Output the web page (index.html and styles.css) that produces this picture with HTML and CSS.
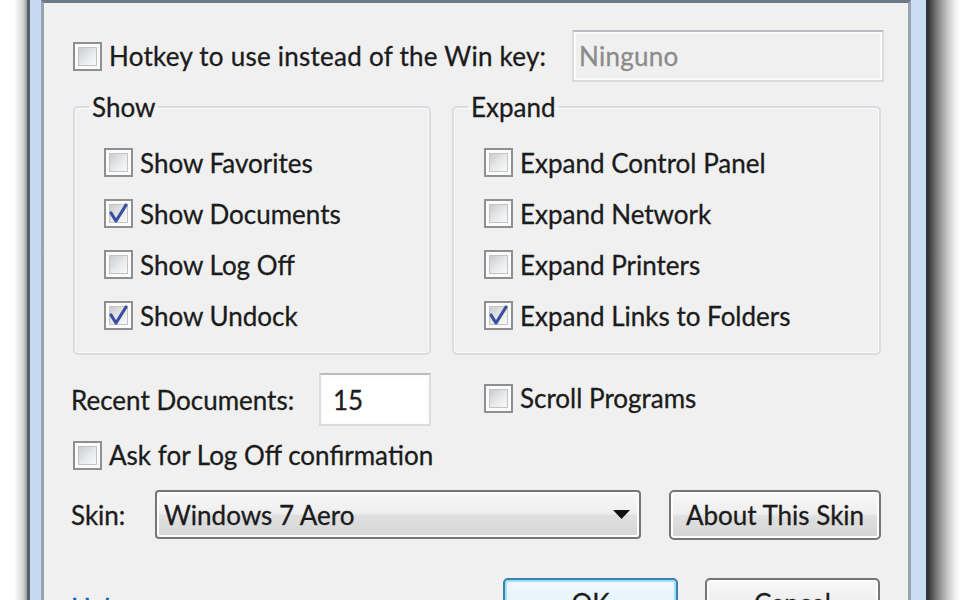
FILE: index.html
```html
<!DOCTYPE html>
<html lang="en">
<head>
    <meta charset="UTF-8">
    <meta name="viewport" content="width=device-width, initial-scale=1.0">
    <title>Start Menu Settings</title>
    <link rel="stylesheet" href="styles.css">
</head>
<body>
    <div class="desk"></div>
    <div class="window">
        <div class="client">
            <div class="hotkey-row">
                <label class="check"><span class="box"></span>Hotkey to use instead of the Win key:</label>
                <div class="field field-disabled">Ninguno</div>
            </div>

            <div class="groups">
                <fieldset class="group group-show">
                    <legend>Show</legend>
                    <div class="group-body">
                        <label class="check row"><span class="box"></span>Show Favorites</label>
                        <label class="check row"><span class="box"><svg viewBox="0 0 29 29"><path d="M7 14 L12 22 L22 6"/></svg></span>Show Documents</label>
                        <label class="check row"><span class="box"></span>Show Log Off</label>
                        <label class="check row"><span class="box"><svg viewBox="0 0 29 29"><path d="M7 14 L12 22 L22 6"/></svg></span>Show Undock</label>
                    </div>
                </fieldset>
                <fieldset class="group group-expand">
                    <legend>Expand</legend>
                    <div class="group-body">
                        <label class="check row"><span class="box"></span>Expand Control Panel</label>
                        <label class="check row"><span class="box"></span>Expand Network</label>
                        <label class="check row"><span class="box"></span>Expand Printers</label>
                        <label class="check row"><span class="box"><svg viewBox="0 0 29 29"><path d="M7 14 L12 22 L22 6"/></svg></span>Expand Links to Folders</label>
                    </div>
                </fieldset>
            </div>

            <div class="options">
                <div class="recent">
                    <span>Recent Documents:</span>
                    <div class="field field-number">15</div>
                </div>
                <label class="check scroll"><span class="box"></span>Scroll Programs</label>
            </div>

            <label class="check ask"><span class="box"></span>Ask for Log Off confirmation</label>

            <div class="skin-row">
                <span class="skin-label">Skin:</span>
                <div class="combo">
                    <span>Windows 7 Aero</span>
                    <svg class="arrow" viewBox="0 0 17 9"><path d="M0 0 H17 L8.5 9 Z"/></svg>
                </div>
                <button class="btn about">About This Skin</button>
            </div>

            <div class="footer">
                <a class="help" href="#">Help</a>
                <div class="actions">
                    <button class="btn btn-default">OK</button>
                    <button class="btn">Cancel</button>
                </div>
            </div>
        </div>
    </div>
    <div class="shadow"></div>
</body>
</html>
```

FILE: styles.css
```css
* {
    margin: 0;
    padding: 0;
    box-sizing: border-box;
}

body {
    width: 960px;
    height: 600px;
    overflow: hidden;
    display: flex;
    background-color: #fff;
    font-family: "Lato", "Open Sans", sans-serif;
    font-size: 26px;
    color: #1b1b1b;
    -webkit-text-stroke: 0.3px currentColor;
}

.desk {
    width: 27px;
    background: linear-gradient(to right, #fff 0, #fff 14px, #d6d6d6 23px, #9c9c9c 27px);
}

.window {
    width: 902px;
    display: flex;
    padding: 0 15px 0 11px;
    border-left: 3px solid #565f69;
    border-right: 3px solid #2f353b;
    background: linear-gradient(to right, #c4d9f1, #d9e8f8 50%, #c9ddf3);
}

.shadow {
    flex: 1;
    background: linear-gradient(to right, #3a3a3a 0, #7c7c7c 8px, #c4c4c4 18px, #f3f3f3 27px, #fff 31px);
}

.client {
    width: 870px;
    height: 600px;
    padding: 27px 27px 0 29px;
    background-color: #f0f0f0;
    border: 3px solid #97a3ad;
    border-top-color: #6c7986;
    border-bottom: none;
}

/* checkboxes */

.check {
    display: flex;
    align-items: center;
    gap: 7px;
    white-space: nowrap;
}

.box {
    width: 29px;
    height: 29px;
    flex: none;
    display: grid;
    padding: 3px;
    border: 2px solid #8e8f8f;
    background-color: #fbfbfb;
}

.box::before {
    content: "";
    grid-area: 1 / 1;
    border: 1px solid #c4c4c4;
    background: linear-gradient(135deg, #c9cbce, #e9eaeb 55%, #f9f9f9);
}

.box svg {
    grid-area: 1 / 1;
    width: 29px;
    height: 29px;
    margin: -5px;
    fill: none;
    stroke: #3b4f9f;
    stroke-width: 3.2;
    stroke-linecap: round;
    stroke-linejoin: round;
}

/* text fields */

.field {
    display: flex;
    align-items: center;
    padding-left: 5px;
    border: 2px solid #dadcdf;
    border-top-color: #b9bcc1;
    box-shadow: inset 0 0 0 2px #fbfbfb;
}

.field-disabled {
    width: 312px;
    height: 52px;
    margin-left: auto;
    margin-right: -3px;
    color: #8b8b8b;
    background-color: #f0f0f0;
}

.field-number {
    width: 112px;
    height: 53px;
    padding-left: 12px;
    background-color: #fff;
}

/* layout */

.hotkey-row {
    display: flex;
    align-items: center;
    height: 52px;
    letter-spacing: 0.25px;
}

.groups {
    display: flex;
    gap: 21px;
    margin-top: 10px;
}

.group {
    border: 2px solid #d9dde1;
    border-radius: 5px;
    box-shadow: inset 0 0 0 1px #fafafa;
}

.group-show {
    width: 358px;
}

.group-expand {
    flex: 1;
}

.group legend {
    margin-left: 14px;
    padding: 0 3px;
    line-height: 30px;
}

.group-body {
    padding: 15px 0 12px 29px;
}

.group-expand .group-body {
    padding-left: 30px;
}

.row {
    height: 51px;
}

.options {
    display: grid;
    grid-template-columns: 358px 1fr;
    column-gap: 21px;
    margin-top: 18px;
}

.recent {
    display: flex;
    align-items: center;
    justify-content: space-between;
    margin-left: -2px;
}

.scroll {
    align-self: start;
    margin-top: 9px;
    padding-left: 32px;
}

.ask {
    margin-top: 13px;
}

.skin-row {
    display: flex;
    align-items: center;
    height: 51px;
    margin-top: 18px;
}

.skin-label {
    width: 84px;
    margin-left: -2px;
    flex: none;
}

.combo {
    width: 486px;
    height: 49px;
    display: flex;
    align-items: center;
    justify-content: space-between;
    padding: 0 9px 0 7px;
    border: 2px solid #767676;
    border-radius: 4px;
    background: linear-gradient(#f8f8f8, #eeeeee 48%, #e0e0e0 52%, #d6d6d6);
    box-shadow: inset 0 0 0 2px #fcfcfc;
}

.arrow {
    width: 17px;
    height: 9px;
    fill: #111;
}

.btn {
    font: inherit;
    color: inherit;
    height: 50px;
    border: 2px solid #767676;
    border-radius: 5px;
    background: linear-gradient(#f8f8f8, #eeeeee 48%, #e0e0e0 52%, #d4d4d4);
    box-shadow: inset 0 0 0 2px #fcfcfc;
}

.about {
    width: 212px;
    margin-left: 28px;
}

.btn-default {
    border-color: #3c7fb1;
    box-shadow: inset 0 0 0 2px #9fe0f7;
    background: linear-gradient(#f1f9fd, #e6f3fa 48%, #d6ecf7 52%, #c9e4f3);
}

.footer {
    display: flex;
    align-items: flex-start;
    margin-top: 38px;
}

.help {
    margin-top: 14px;
    margin-left: -2px;
    color: #0a5fb6;
    text-decoration: none;
}

.actions {
    display: flex;
    gap: 27px;
    margin-left: auto;
    margin-right: 1px;
}

.actions .btn {
    width: 175px;
}
```
